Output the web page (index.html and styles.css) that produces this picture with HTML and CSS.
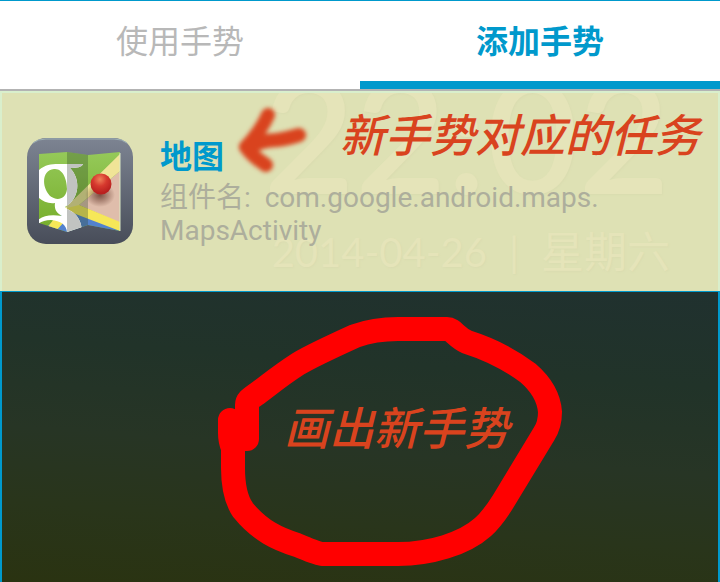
FILE: index.html
```html
<!DOCTYPE html>
<html lang="zh-CN">
<head>
<meta charset="utf-8">
<meta name="viewport" content="width=device-width, initial-scale=1">
<title>添加手势</title>
<link rel="stylesheet" href="styles.css">
</head>
<body>
<nav class="tabs" role="tablist">
  <button class="tab" type="button" role="tab" aria-selected="false">使用手势</button>
  <button class="tab tab-active" type="button" role="tab" aria-selected="true">添加手势</button>
</nav>
<main class="content">
  <section class="task">
    <div class="clock" aria-hidden="true">
      <div class="clock-time">22:02</div>
      <div class="clock-date"><span>2014-04-26</span><span class="clock-bar">|</span><span class="clock-day">星期六</span></div>
    </div>
    <svg class="task-icon" viewBox="0 0 108 108" aria-hidden="true">
      <defs>
        <linearGradient id="tile" x1="0" y1="0" x2="0" y2="1"><stop offset="0" stop-color="#7d8492"/><stop offset="1" stop-color="#484d59"/></linearGradient>
        <linearGradient id="leaf" x1="0" y1="0" x2="0" y2="1"><stop offset="0" stop-color="#97cb5c"/><stop offset="1" stop-color="#74ab27"/></linearGradient>
        <radialGradient id="ball" cx=".45" cy=".28" r=".65"><stop offset="0" stop-color="#ef8058"/><stop offset=".5" stop-color="#d6392e"/><stop offset="1" stop-color="#b9201f"/></radialGradient>
        <radialGradient id="shade"><stop offset="0" stop-color="#5a2c20" stop-opacity=".75"/><stop offset="1" stop-color="#5a2c20" stop-opacity="0"/></radialGradient>
        <clipPath id="map"><path d="M13 17L41 15L62 18L94 15V94L62 88L41 95L13 86Z"/></clipPath>
        <clipPath id="fold"><path d="M41 0H62V108H41Z"/></clipPath>
        <path id="letter" fill-rule="evenodd" d="M12 34C18 28 25 27 32 27H57C56 30 51 31 44 31C55 42 53 60 42 68L39 70C42 73 46 74 49 77C53 81 56 87 56 96H41C41 88 35 84 25 83C19 83 15 85 12 87V83C17 79 24 77 36 79C31 76 28 73 29 66C22 67 16 64 12 60ZM28 32C18 33 16 44 20 53C25 65 40 65 41 52C41 43 37 31 28 32Z"/>
      </defs>
      <rect x="1" y="1" width="106" height="106" rx="19" fill="url(#tile)"/>
      <path d="M7 6Q12 2 20 2H88Q96 2 101 6" fill="none" stroke="#9db0b5" stroke-width="1"/>
      <g clip-path="url(#map)">
        <path d="M10 10H98V98H10Z" fill="url(#leaf)"/>
        <path d="M94 34V86L53 68Z" fill="#dfbdab"/>
        <path d="M94 17V34L53 68L58 72L37 73Z" fill="#f0e497"/>
        <path d="M42 73L53 76L94 94V98H10L29 83Z" fill="#5382ce"/>
        <path d="M37 72L53 68L94 85V94L47 76Z" fill="#f6e758"/>
        <path d="M20 92L28 82L39 84L29 95Z" fill="#f6e758"/>
        <path d="M41 10H62V98H41Z" fill="#30482a" fill-opacity=".32"/>
        <use href="#letter" fill="#fff"/>
        <use href="#letter" fill="#c1c3c1" clip-path="url(#fold)"/>
      </g>
      <path d="M94 16V94" stroke="#dceac5" stroke-width="1" fill="none"/>
      <ellipse cx="74" cy="58" rx="15" ry="12" fill="url(#shade)"/>
      <circle cx="75" cy="47" r="10.500" fill="url(#ball)"/>
    </svg>
    <div class="task-text">
      <h1 class="task-name">地图</h1>
      <p class="task-component">组件名:&nbsp; com.google.android.maps.<wbr>MapsActivity</p>
    </div>
    <svg class="arrow" viewBox="0 0 80 76" aria-hidden="true">
      <path d="M36 12Q29 28 14 44Q20 53 34 62M16 45Q30 37 45 37Q58 35 67 32" fill="none" stroke="#d9431e" stroke-width="14" stroke-linecap="round" stroke-linejoin="round"/>
    </svg>
    <p class="note note-task">新手势对应的任务</p>
  </section>
  <section class="pad">
    <svg class="gesture" viewBox="0 0 346 250" aria-hidden="true">
      <path d="M12 98V111Q12 119 15 126V146C15 163 18 178 25 188C42 209 60 217 79 223Q98 231 104 232H180C212 232 246 222 265 205C275 196 281 186 286 178L326 112Q332 103 332 90C331 76 325 64 310 51C290 36 268 26 249 20C238 15 235 7 229 7H180C164 7 148 10 137 14C104 29 90 36 80 42C60 55 51 63 40 71C33 76 29 78 29 83V117" fill="none" stroke="#f00" stroke-width="24" stroke-linecap="round" stroke-linejoin="round"/>
    </svg>
    <p class="note note-pad">画出新手势</p>
  </section>
</main>
</body>
</html>
```
FILE: styles.css
```css
* {
  box-sizing: border-box;
}

body {
  margin: 0;
  min-height: 100vh;
  display: flex;
  flex-direction: column;
  font-family: Roboto, "Noto Sans CJK SC", sans-serif;
  background: #222f25;
}

h1,
p {
  margin: 0;
}

.tabs {
  display: flex;
  border-top: 1px solid #0099cc;
  border-bottom: 2px solid #b3b3b3;
  background: #fff;
}

.tab {
  flex: 1;
  height: 88px;
  padding: 0 0 12px;
  border: 0;
  background: none;
  color: #b8b8b8;
  font: 400 32px/48px "Noto Sans CJK SC", sans-serif;
}

.tab-active {
  padding-bottom: 4px;
  border-bottom: 8px solid #0099cc;
  color: #0099cc;
  font-weight: 700;
}

.content {
  flex: 1;
  display: flex;
  flex-direction: column;
}

.task {
  position: relative;
  display: flex;
  align-items: flex-start;
  gap: 26px;
  min-height: 200px;
  padding: 44px 24px 40px;
  overflow: hidden;
  border: 2px solid #d9efcc;
  border-bottom: 0;
  background: #dee1b4;
}

.clock {
  position: absolute;
  top: 0;
  right: 48px;
  color: #e5e4b9;
  font-family: Lato, "Noto Sans CJK SC", sans-serif;
  text-shadow: 1px 1px 2px #dadcb0;
}

.clock-time {
  margin-top: -39px;
  font-size: 158px;
  line-height: 158px;
  font-weight: 600;
  white-space: nowrap;
}

.clock-date {
  display: flex;
  align-items: center;
  justify-content: flex-end;
  gap: 22px;
  margin-top: 12px;
  font-size: 40px;
  line-height: 56px;
  white-space: nowrap;
}

.clock-day {
  font-size: 43px;
}

.task-icon {
  position: relative;
  flex: none;
  width: 108px;
  height: 108px;
}

.task-text {
  position: relative;
  flex: 1;
  max-width: 480px;
}

.task-name {
  color: #0099cc;
  font-size: 32px;
  line-height: 40px;
  padding-bottom: 4px;
  font-weight: 700;
}

.task-component {
  color: #adae9c;
  font-size: 28px;
  line-height: 33px;
}

.arrow {
  position: absolute;
  left: 230px;
  top: 10px;
  width: 80px;
  height: 76px;
  filter: blur(2px);
}

.note {
  position: absolute;
  color: #d9431e;
  font: italic 500 45px/60px "Noto Sans CJK SC", sans-serif;
  white-space: nowrap;
}

.note-task {
  right: 18px;
  top: 10px;
}

.pad {
  position: relative;
  flex: 1;
  min-height: 290px;
  border: solid #0099cc;
  border-width: 1px 2px 0;
  background: linear-gradient(4deg, #2a3311 0%, #29351b 24%, #273525 46%, #213329 72%, #20312f 100%);
}

.gesture {
  position: absolute;
  left: 216px;
  top: 30px;
  width: 346px;
  height: 250px;
  overflow: visible;
}

.note-pad {
  left: 282px;
  top: 104px;
}
```
